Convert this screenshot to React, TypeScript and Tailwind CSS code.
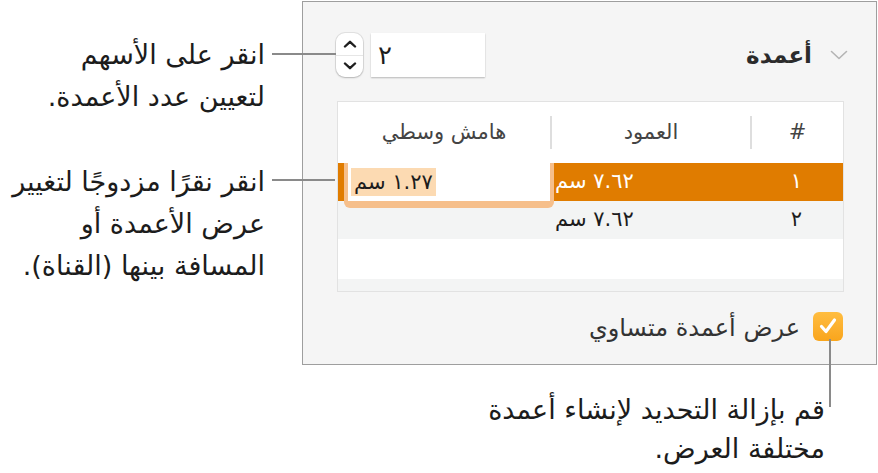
const font = { fontFamily: '"DejaVu Sans", sans-serif' };

function Leader({ w, mt, over }: { w: number; mt: number; over: number }) {
  return (
    <div
      className="relative z-10 h-[2px] shrink-0 bg-[#8a8a8a]"
      style={{ width: w, marginTop: mt, marginRight: -over }}
    />
  );
}

function Stepper() {
  return (
    <div className="flex h-[44px] w-[27px] shrink-0 flex-col items-center justify-between rounded-[9px] bg-white py-[7px] shadow-[0_0_0_1px_rgba(0,0,0,0.08),0_1px_2px_rgba(0,0,0,0.2)]">
      <svg width="14" height="8" viewBox="0 0 14 8">
        <path d="M2 6.5 L7 1.8 L12 6.5" fill="none" stroke="#1f1f1f" strokeWidth="2.4" strokeLinecap="round" strokeLinejoin="round" />
      </svg>
      <div className="h-px w-full bg-[#e6e6e6]" />
      <svg width="14" height="8" viewBox="0 0 14 8">
        <path d="M2 1.5 L7 6.2 L12 1.5" fill="none" stroke="#1f1f1f" strokeWidth="2.4" strokeLinecap="round" strokeLinejoin="round" />
      </svg>
    </div>
  );
}

function HeaderCell({ label, divider }: { label: string; divider?: boolean }) {
  return (
    <div className="flex h-[61px] items-center">
      <div className="flex-1 text-center text-[21px] text-[#444]">{label}</div>
      {divider && <div className="h-[33px] w-[2px] bg-[#dedede]" />}
    </div>
  );
}

export default function App() {
  return (
    <div className="h-[473px] w-[878px] overflow-hidden bg-white text-[#1c1c1c]" style={font}>
      <div className="flex items-start">
        {/* callouts on the left */}
        <div className="w-[302px] shrink-0 pt-[34px]">
          <div className="flex items-start">
            <div dir="rtl" className="w-[265px] text-right text-[27px] leading-[42px]">
              <div>انقر على الأسهم</div>
              <div>لتعيين عدد الأعمدة.</div>
            </div>
            <div className="w-[7px] shrink-0" />
            <Leader w={64} mt={19} over={34} />
          </div>
          <div className="mt-[43px] flex items-start">
            <div dir="rtl" className="w-[265px] text-right text-[27px] leading-[42px]">
              <div>انقر نقرًا مزدوجًا لتغيير</div>
              <div>عرض الأعمدة أو</div>
              <div>المسافة بينها (القناة).</div>
            </div>
            <div className="w-[7px] shrink-0" />
            <Leader w={63} mt={18} over={33} />
          </div>
        </div>

        {/* inspector panel */}
        <div dir="rtl" className="mt-[1px] h-[364px] w-[575px] shrink-0 border border-[#9e9e9e] bg-[#f5f5f5] pl-[34px] pr-[32px] pt-[31px]">
          <div className="flex h-[44px] items-center justify-between">
            <div className="-mr-[4px] flex items-center gap-[18px]">
              <svg width="18" height="10" viewBox="0 0 18 10">
                <path d="M1.5 1.5 L9 8.5 L16.5 1.5" fill="none" stroke="#b4b4b4" strokeWidth="1.6" strokeLinecap="round" strokeLinejoin="round" />
              </svg>
              <div className="text-[23px] font-bold text-[#2b2b2b]">أعمدة</div>
            </div>
            <div className="-ml-[1px] flex items-center gap-[8px]">
              <div className="flex h-[44px] w-[114px] items-center bg-white text-[26px] shadow-[0_1px_1.5px_rgba(0,0,0,0.25)]">
                <span className="w-full pl-[7px] text-left">٢</span>
              </div>
              <Stepper />
            </div>
          </div>

          {/* columns table */}
          <div className="mt-[24px] h-[191px] border border-[#e2e2e2] bg-[#f3f4f4]">
            <div className="grid grid-cols-[93px_200px_1fr] bg-white">
              <HeaderCell label="#" divider />
              <HeaderCell label="العمود" divider />
              <HeaderCell label="هامش وسطي" />
            </div>
            <div className="grid h-[38px] grid-cols-[93px_200px_1fr] bg-[#e07c00] text-[21px] text-white">
              <div className="flex items-center justify-center">١</div>
              <div className="flex items-center justify-end pl-[5px]">٧.٦٢ سم</div>
              <div className="relative">
                <div className="absolute -right-[4px] left-[6px] -bottom-[7px] top-0 rounded-b-[6px] border-x-[4px] border-b-[7px] border-[#f6bf8b] bg-white">
                  <div className="flex h-full items-center justify-end pl-[3px]">
                    <span className="bg-[#fcdab2] px-[3px] leading-[28px] text-[#1c1c1c]">١.٢٧ سم</span>
                  </div>
                </div>
              </div>
            </div>
            <div className="grid h-[38px] grid-cols-[93px_200px_1fr] text-[21px]">
              <div className="flex items-center justify-center">٢</div>
              <div className="flex items-center justify-end pl-[5px]">٧.٦٢ سم</div>
              <div />
            </div>
            <div className="h-[40px] bg-white" />
          </div>

          {/* equal width checkbox */}
          <div className="mt-[19px] flex h-[30px] items-center gap-[13px] pr-[1px]">
            <div className="flex h-[29px] w-[30px] items-center justify-center rounded-[6px] bg-gradient-to-b from-[#ffbd3f] to-[#f9a51b]">
              <svg width="20" height="18" viewBox="0 0 20 18">
                <path d="M3.5 9.5 L8 14.5 L16.5 3" fill="none" stroke="white" strokeWidth="3.2" strokeLinecap="round" strokeLinejoin="round" />
              </svg>
            </div>
            <div className="pt-[4px] text-[24px] text-[#333]">عرض أعمدة متساوي</div>
          </div>
        </div>
      </div>

      {/* bottom callout */}
      <div className="flex items-start justify-end pr-[47px]">
        <div dir="rtl" className="mt-[25px] text-right text-[27px] leading-[39px]">
          <div>قم بإزالة التحديد لإنشاء أعمدة</div>
          <div>مختلفة العرض.</div>
        </div>
        <div className="w-[4px] shrink-0" />
        <div className="relative z-10 -mt-[26px] h-[68px] w-[2px] shrink-0 bg-[#8a8a8a]" />
      </div>
    </div>
  );
}
